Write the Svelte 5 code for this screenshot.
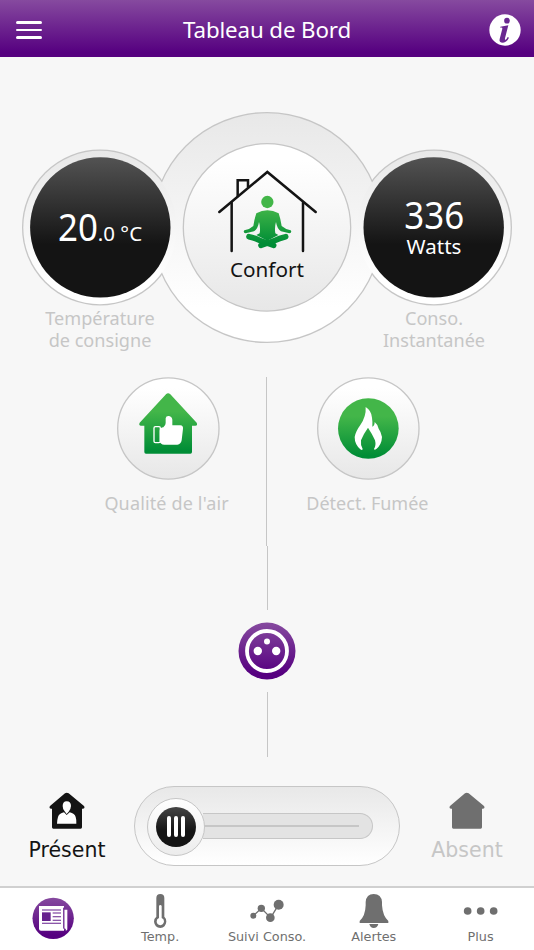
<script lang="ts">
	interface Tab {
		id: string;
		label?: string;
	}

	const tabs: Tab[] = [
		{ id: 'home' },
		{ id: 'temp', label: 'Temp.' },
		{ id: 'usage', label: 'Suivi Conso.' },
		{ id: 'alerts', label: 'Alertes' },
		{ id: 'more', label: 'Plus' }
	];

	let present = $state(true);
</script>

<div class="screen">
	<header>
		<button class="menu" aria-label="Menu"><i></i><i></i><i></i></button>
		<h1>Tableau de Bord</h1>
		<button class="info" aria-label="Informations">
			<svg width="32" height="32" viewBox="0 0 96 96">
				<circle cx="48" cy="48" r="47" fill="#fff" />
				<circle cx="54" cy="20" r="8.5" fill="#6a2891" />
				<path
					d="M34 38Q46 37 58 34L48 73Q47 79 50 77Q53 75 56 69L60 71Q53 85 42 86Q29 86 32 75L40 44Q41 40 34 41Z"
					fill="#6a2891"
				/>
			</svg>
		</button>
	</header>

	<section class="dials">
		<svg class="dials-bg" width="534" height="300" viewBox="0 57 534 300">
			<defs>
				<linearGradient id="ring" x1="0" y1="0" x2="0" y2="1">
					<stop offset="0" stop-color="#e8e8e8" />
					<stop offset="0.85" stop-color="#fff" />
				</linearGradient>
				<linearGradient id="plate" x1="0" y1="0" x2="0" y2="1">
					<stop offset="0.1" stop-color="#fff" />
					<stop offset="1" stop-color="#e7e7e7" />
				</linearGradient>
				<linearGradient id="dark" x1="0" y1="0" x2="0" y2="1">
					<stop offset="0" stop-color="#535353" />
					<stop offset="0.62" stop-color="#141414" />
				</linearGradient>
				<linearGradient id="body" gradientUnits="userSpaceOnUse" x1="0" y1="290" x2="0" y2="445">
					<stop offset="0.2" stop-color="#43b649" />
					<stop offset="0.9" stop-color="#008d36" />
				</linearGradient>
			</defs>
			<g fill="none" stroke="#c6c6c6" stroke-width="2.6">
				<circle cx="100" cy="227.5" r="76.7" />
				<circle cx="434" cy="227.5" r="76.7" />
				<circle cx="267" cy="227.5" r="114.3" />
			</g>
			<circle cx="267" cy="227.5" r="114.3" fill="url(#ring)" />
			<circle cx="100" cy="227.5" r="76.7" fill="url(#ring)" />
			<circle cx="434" cy="227.5" r="76.7" fill="url(#ring)" />
			<circle cx="100.3" cy="227.4" r="70.2" fill="url(#dark)" />
			<circle cx="433.7" cy="227.4" r="70.2" fill="url(#dark)" />
			<circle cx="267" cy="227.4" r="83.7" fill="url(#plate)" stroke="#c6c6c6" stroke-width="1.3" />
			<g transform="translate(175 100) scale(0.33333)">
				<g fill="none" stroke="#141414" stroke-width="7.5" stroke-linecap="round">
					<path d="M133 336L277 216L422 336" stroke-linejoin="miter" />
					<path d="M170 308V453M384 308V453" />
					<path d="M188 288V241H219V261" />
				</g>
				<circle cx="277" cy="306" r="18.5" fill="url(#body)" />
				<path
					d="M244 340Q277 321 311 340Q317 358 320 378Q333 389 347 391Q352 397 343 400L318 394Q306 386 303 366Q298 382 301 400L310 405L277 422L244 405L254 400Q257 382 252 366Q249 386 237 394L212 400Q203 397 208 391Q223 389 235 378Q238 358 244 340Z"
					fill="url(#body)"
				/>
				<path
					d="M222 410Q240 414 258 423L296 436M332 410Q314 414 296 423L258 436"
					fill="none"
					stroke="url(#body)"
					stroke-width="17"
					stroke-linecap="round"
				/>
			</g>
		</svg>

		<div class="dial">
			<div class="value"><span class="temp"><b>20</b>.0 °C</span></div>
			<p>Température<br />de consigne</p>
		</div>
		<div class="mode">Confort</div>
		<div class="dial">
			<div class="value power"><b>336</b><span>Watts</span></div>
			<p>Conso.<br />Instantanée</p>
		</div>
	</section>

	<section class="sensors">
		<div class="sensor">
			<svg width="104" height="104" viewBox="48 33 312 312">
				<defs>
					<linearGradient id="green" x1="0" y1="0" x2="0" y2="1">
						<stop offset="0.3" stop-color="#43b649" />
						<stop offset="0.95" stop-color="#008d36" />
					</linearGradient>
				</defs>
				<circle cx="205" cy="190.5" r="152" fill="url(#plate)" stroke="#c6c6c6" stroke-width="4" />
				<path
					d="M198 88Q204 82 211 88L290 173Q294 182 286 182H276V261Q276 266 271 266H138Q133 266 133 261V182H123Q115 181 119 173Z"
					fill="url(#green)"
				/>
				<rect x="162" y="185" width="19" height="48" rx="4" fill="none" stroke="#fff" stroke-width="4" />
				<path
					d="M179 197Q180 188 190 187Q197 182 197 174V160Q198 152 207 153Q216 155 217 164V181H241Q250 182 249 191L245 226Q243 238 232 239H193Q180 238 179 227Z"
					fill="#fff"
				/>
			</svg>
			<p class="air">Qualité de l'air</p>
		</div>
		<div class="divider"></div>
		<div class="sensor">
			<svg width="104" height="104" viewBox="168 33 312 312">
				<circle cx="325" cy="190.5" r="152" fill="url(#plate)" stroke="#c6c6c6" stroke-width="4" />
				<circle cx="325" cy="190.5" r="91" fill="url(#green)" />
				<path
					d="M317 126Q334 136 336 158Q338 170 337 185Q344 182 344 171Q352 177 356 191Q363 200 366 216Q365 239 349 252Q343 256 342 252Q349 241 345 226Q338 209 324 188Q309 209 303 226Q301 241 308 252Q307 257 301 253Q284 238 284 216Q287 199 301 180Q319 154 317 126Z"
					fill="#fff"
				/>
			</svg>
			<p>Détect. Fumée</p>
		</div>
	</section>

	<section class="plug">
		<div class="line"></div>
		<svg width="58" height="58" viewBox="0 0 58 58">
			<defs>
				<linearGradient id="purple" x1="0" y1="0" x2="0" y2="1">
					<stop offset="0" stop-color="#864a9f" />
					<stop offset="0.9" stop-color="#560080" />
				</linearGradient>
			</defs>
			<circle cx="29" cy="29" r="28.5" fill="url(#purple)" />
			<circle cx="29" cy="29" r="20" fill="none" stroke="#fff" stroke-width="3.8" />
			<circle cx="29" cy="19.4" r="3" fill="#fff" />
			<circle cx="19.8" cy="29" r="4.2" fill="#fff" />
			<circle cx="38.2" cy="29" r="4.2" fill="#fff" />
		</svg>
		<div class="line"></div>
	</section>

	<section class="presence">
		<button class="state" class:active={present} onclick={() => (present = true)}>
			<svg width="36" height="37" viewBox="117 52 108 111">
				<path
					d="M165 56Q170 52 176 56L222 94Q226 101 219 102H216V158Q216 162 212 162H130Q126 162 126 158V102H123Q116 101 120 94Z"
				/>
				<path
					d="M158 94Q158 80 170 80Q183 80 183 94Q182 106 176 111L170 118L165 111Q158 106 158 94ZM162 113L170 121L179 113Q194 116 197 127Q200 137 199 147H141Q141 137 144 127Q147 116 162 113Z"
					fill="#fff"
				/>
			</svg>
			<span>Présent</span>
		</button>
		<div class="slider">
			<div class="track"></div>
			<div class="knob"><div class="grip"><i></i><i></i><i></i></div></div>
		</div>
		<button class="state" class:active={!present} onclick={() => (present = false)}>
			<svg width="36" height="37" viewBox="117 52 108 111">
				<path
					d="M165 56Q170 52 176 56L222 94Q226 101 219 102H216V158Q216 162 212 162H130Q126 162 126 158V102H123Q116 101 120 94Z"
				/>
			</svg>
			<span>Absent</span>
		</button>
	</section>

	<nav>
		{#each tabs as tab (tab.id)}
			<button class="tab" class:home={tab.id === 'home'} aria-label={tab.label ?? 'Accueil'}>
				{#if tab.id === 'home'}
					<svg width="42" height="42" viewBox="97 52 126 126">
						<circle cx="160.5" cy="116" r="62" fill="url(#purple)" />
						<path d="M118 79H193V153H124Q118 153 118 147Z" fill="#fff" />
						<path d="M194 90H203V149Q203 153 198 152Q194 151 194 145Z" fill="#fff" />
						<path d="M192 84V145Q193 151 199 149" fill="none" stroke="#66218d" stroke-width="3" />
						<path d="M127 91H184M159 100H184M159 111H184M159 122H184M127 131H184" stroke="#66218d" stroke-width="3.2" />
						<path d="M127 98H153V124H127Z" fill="#66218d" />
					</svg>
				{:else if tab.id === 'temp'}
					<svg width="42" height="36" viewBox="417 39 126 108">
						<path d="M469 54Q469 42 481 42Q493 42 493 54V110Q499 115 499 125Q497 142 481 144Q464 142 462 125Q462 115 469 110Z" />
						<path d="M477 78Q478 75 481 75Q484 75 485 78V114Q492 117 492 124Q491 134 481 136Q470 134 470 124Q470 117 477 114Z" fill="#fff" />
					</svg>
				{:else if tab.id === 'usage'}
					<svg width="42" height="36" viewBox="738 39 126 108">
						<path d="M760 107L784 85L812 113L836 74" fill="none" stroke="#6f6f6f" stroke-width="4" />
						<circle cx="760" cy="107" r="9" />
						<circle cx="784" cy="85" r="11" />
						<circle cx="811" cy="113" r="13" />
						<circle cx="836" cy="74" r="15" />
					</svg>
				{:else if tab.id === 'alerts'}
					<svg width="42" height="36" viewBox="266 39 126 108">
						<path d="M286 129V123Q303 108 304 76V66Q306 42 328 42Q351 42 353 66V76Q355 108 372 123V129Z" />
						<path d="M315 132H342Q339 144 328 144Q318 144 315 132Z" />
					</svg>
				{:else}
					<svg width="42" height="36" viewBox="587 39 126 108">
						<circle cx="610" cy="93" r="11.5" />
						<circle cx="649" cy="93" r="11.5" />
						<circle cx="688" cy="93" r="11.5" />
					</svg>
				{/if}
				{#if tab.label}
					<span>{tab.label}</span>
				{/if}
			</button>
		{/each}
	</nav>
</div>

<style>
	:global(body) {
		margin: 0;
		background: #f7f7f7;
	}

	.screen {
		display: flex;
		flex-direction: column;
		width: 534px;
		height: 950px;
		overflow: hidden;
		background: #f7f7f7;
		font-family: 'Noto Sans', sans-serif;
		color: #c6c6c6;
	}

	svg {
		display: block;
		flex: none;
	}

	p,
	h1 {
		margin: 0;
		font-weight: 400;
	}

	b {
		font-weight: 400;
	}

	button {
		padding: 0;
		border: 0;
		background: none;
		font: inherit;
		color: inherit;
	}

	header {
		display: flex;
		align-items: center;
		justify-content: space-between;
		box-sizing: border-box;
		height: 57px;
		padding: 2px 13px 0 16px;
		background: linear-gradient(#864a9f, #560080 92%);
		color: #fff;
	}

	h1 {
		font-size: 22.3px;
		line-height: 30px;
		letter-spacing: -0.12px;
	}

	.menu {
		display: flex;
		flex-direction: column;
		gap: 4.6px;
		width: 29px;
		padding-top: 1px;
	}

	.menu i {
		width: 25.5px;
		height: 2.7px;
		border-radius: 2px;
		background: #fff;
	}

	.dials {
		position: relative;
		display: grid;
		grid-template-columns: 200px 134px 200px;
		height: 320px;
		text-align: center;
	}

	.dials-bg {
		position: absolute;
		top: 0;
		left: 0;
	}

	.dial {
		position: relative;
		padding-top: 100px;
	}

	.dial p {
		margin-top: 11px;
		font-size: 18.1px;
		line-height: 21.5px;
	}

	.value {
		display: flex;
		flex-direction: column;
		align-items: center;
		justify-content: center;
		height: 140px;
		color: #fff;
		font-size: 20.5px;
	}

	.value b {
		display: inline-block;
		font-size: 37.5px;
		line-height: 40px;
		transform: scaleX(0.93);
	}

	.temp b {
		margin-right: -3px;
		transform-origin: left;
	}

	.power {
		justify-content: flex-start;
		box-sizing: border-box;
		padding-top: 38px;
	}

	.power span {
		line-height: 23px;
	}

	.mode {
		position: relative;
		padding-top: 198px;
		color: #141414;
		font-size: 20.7px;
		line-height: 28px;
	}

	.sensors {
		display: flex;
		justify-content: center;
		height: 169px;
	}

	.sensor {
		display: flex;
		flex-direction: column;
		align-items: center;
		width: 199px;
		font-size: 18px;
		line-height: 24px;
	}

	.sensor svg {
		margin: -1px 0 0 2px;
	}

	.sensor p {
		margin-top: 11px;
	}

	.sensor .air {
		letter-spacing: 0.15px;
	}

	.divider {
		width: 1px;
		height: 169px;
		margin-right: 0.8px;
		background: #c6c6c6;
	}

	.plug {
		display: flex;
		flex-direction: column;
		align-items: center;
		gap: 12px;
		height: 240px;
	}

	.line {
		width: 1px;
		height: 64px;
		background: #c6c6c6;
	}

	.plug .line:last-child {
		height: 65px;
	}

	.presence {
		display: flex;
		align-items: flex-start;
		height: 100px;
	}

	.state {
		display: flex;
		flex-direction: column;
		align-items: center;
		width: 134px;
		padding-top: 6px;
		font-family: 'DejaVu Sans', sans-serif;
		font-size: 20.5px;
		line-height: 24px;
		color: #c6c6c6;
		fill: #6f6f6f;
	}

	.state span {
		margin-top: 9px;
	}

	.state.active {
		color: #141414;
		fill: #141414;
	}

	.slider {
		display: flex;
		align-items: center;
		box-sizing: border-box;
		width: 266px;
		height: 80px;
		padding-left: 12px;
		border: 1.3px solid #c6c6c6;
		border-radius: 40px;
		background: linear-gradient(#e8e8e8, #fff);
	}

	.track {
		display: flex;
		align-items: center;
		order: 2;
		box-sizing: border-box;
		width: 170px;
		height: 26px;
		margin-left: -2px;
		padding-right: 13px;
		border: 1.3px solid #c6c6c6;
		border-left: 0;
		border-radius: 0 13px 13px 0;
		background: #e3e3e3;
	}

	.track::before {
		content: '';
		width: 100%;
		height: 2px;
		background: #c6c6c6;
	}

	.knob {
		display: grid;
		place-items: center;
		z-index: 1;
		box-sizing: border-box;
		width: 58px;
		height: 58px;
		margin-top: 1px;
		border: 1.3px solid #c6c6c6;
		border-radius: 50%;
		background: linear-gradient(#fff, #ececec);
	}

	.grip {
		display: flex;
		align-items: center;
		justify-content: center;
		gap: 3.2px;
		width: 40px;
		height: 40px;
		border-radius: 50%;
		background: linear-gradient(#454545, #141414 60%);
	}

	.grip i {
		width: 3.7px;
		height: 21px;
		border-radius: 2px;
		background: #fff;
	}

	nav {
		display: grid;
		grid-template-columns: repeat(5, 1fr);
		flex: 1;
		border-top: 2px solid #d0d0d0;
		background: #fff;
	}

	.tab {
		display: flex;
		flex-direction: column;
		align-items: center;
		padding-top: 5px;
		font-family: 'DejaVu Sans', sans-serif;
		font-size: 12.8px;
		line-height: 16px;
		color: #6f6f6f;
		fill: #6f6f6f;
	}

	.tab.home {
		padding-top: 9px;
	}

	.tab span {
		margin-top: 0.4px;
		white-space: nowrap;
	}
</style>
